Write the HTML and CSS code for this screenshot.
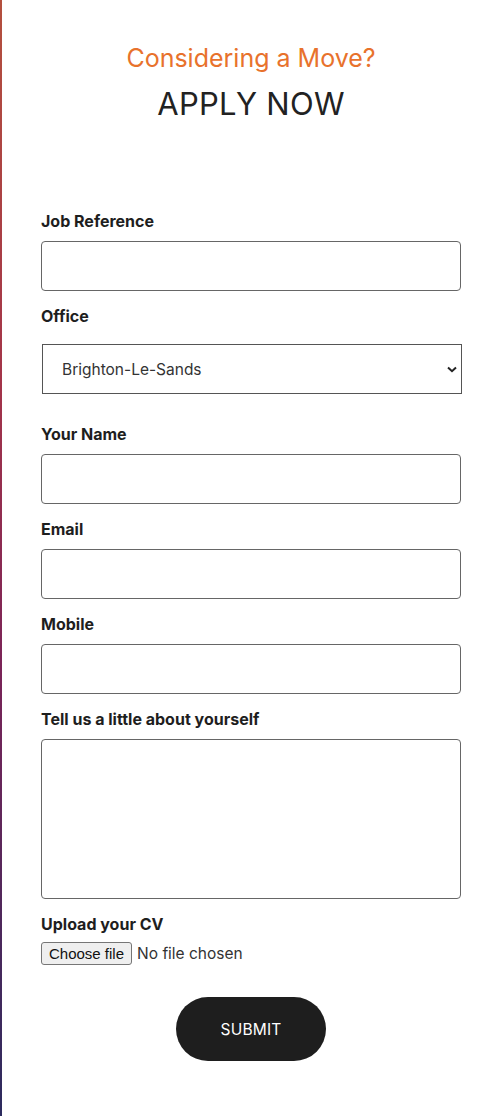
FILE: index.html
```html
<!DOCTYPE html>
<html lang="en">
<head>
<meta charset="utf-8">
<title>Apply Now</title>
<link rel="stylesheet" href="styles.css">
</head>
<body>
<div class="page">
  <header class="intro">
    <p class="kicker">Considering a Move?</p>
    <h1 class="title">APPLY NOW</h1>
  </header>
  <form class="form">
    <div class="field">
      <label class="label" for="ref">Job Reference</label>
      <input class="input" id="ref" type="text">
    </div>
    <div class="field field-office">
      <label class="label label-office" for="office">Office</label>
      <select class="select" id="office">
        <option>Brighton-Le-Sands</option>
      </select>
    </div>
    <div class="field">
      <label class="label" for="name">Your Name</label>
      <input class="input" id="name" type="text">
    </div>
    <div class="field">
      <label class="label" for="email">Email</label>
      <input class="input" id="email" type="email">
    </div>
    <div class="field">
      <label class="label" for="mobile">Mobile</label>
      <input class="input" id="mobile" type="tel">
    </div>
    <div class="field">
      <label class="label" for="about">Tell us a little about yourself</label>
      <textarea class="textarea" id="about"></textarea>
    </div>
    <div class="field">
      <span class="label label-upload">Upload your CV</span>
      <div class="file-row">
        <input class="file-native" id="cv" type="file">
        <label class="file-btn" for="cv">Choose file</label>
        <span class="file-name">No file chosen</span>
      </div>
    </div>
    <div class="actions">
      <button class="submit" type="button">SUBMIT</button>
    </div>
  </form>
</div>
</body>
</html>
```
FILE: styles.css
```css
* { box-sizing: border-box; }
html, body { margin: 0; padding: 0; background: #fff; }
body { font-family: "Inter", "DejaVu Sans", sans-serif; color: #1e1e1e; }

.page {
  min-height: 1116px;
  border-left: 2px solid #a33a48;
  border-image: linear-gradient(to bottom, #b4503e 0%, #a3344a 35%, #7a2458 60%, #2c2b5e 100%) 1;
  padding: 43px 40px 40px 39px;
}

.intro { text-align: center; }
.kicker {
  margin: 0;
  font-size: 25px;
  line-height: 30px;
  font-weight: 400;
  color: #e8722c;
}
.title {
  margin: 12px 0 0;
  font-size: 31px;
  line-height: 38px;
  font-weight: 400;
  letter-spacing: 0.3px;
  color: #222;
}

.form { margin-top: 88px; display: flex; flex-direction: column; }
.field { display: flex; flex-direction: column; margin-bottom: 15px; }
.field-office { margin-bottom: 30px; }

.label {
  font-size: 16px;
  line-height: 20px;
  font-weight: 700;
  color: #1e1e1e;
  margin-bottom: 10px;
}
.label-office { margin-bottom: 18px; }
.label-upload { margin-bottom: 8px; }

.input, .textarea, .select {
  display: block;
  width: 100%;
  height: 50px;
  border: 1px solid #666;
  border-radius: 4px;
  background: #fff;
  font-family: inherit;
  font-size: 15.5px;
  color: #333;
  padding: 0 12px;
  margin: 0;
}
.textarea { height: 160px; resize: none; padding: 10px 12px; }

.select {
  width: 420px;
  margin-left: 1px;
  border-radius: 0;
  border-color: #555;
  padding: 0 40px 0 19px;
  appearance: none;
  -webkit-appearance: none;
  background-image: url("data:image/svg+xml,%3Csvg xmlns='http://www.w3.org/2000/svg' width='10' height='7' viewBox='0 0 10 7'%3E%3Cpath d='M1 1.5 L5 5.2 L9 1.5' fill='none' stroke='%23222' stroke-width='2'/%3E%3C/svg%3E");
  background-repeat: no-repeat;
  background-position: right 4px center;
  color: #333;
}

.file-row { display: flex; align-items: center; gap: 5px; height: 23px; }
.file-native {
  position: absolute;
  width: 1px;
  height: 1px;
  opacity: 0;
  overflow: hidden;
}
.file-btn {
  display: flex;
  align-items: center;
  height: 23px;
  padding: 0 7px;
  font-family: "Liberation Sans", Arial, sans-serif;
  font-size: 15px;
  color: #111;
  background: #efefef;
  border: 1px solid #767676;
  border-radius: 3px;
}
.file-name {
  font-size: 15.5px;
  color: #333;
}

.actions { display: flex; justify-content: center; margin-top: 17px; }
.submit {
  width: 150px;
  height: 64px;
  border: 0;
  border-radius: 32px;
  background: #1e1e1e;
  color: #fff;
  font-family: inherit;
  font-size: 15.5px;
  letter-spacing: 0.2px;
}
```
